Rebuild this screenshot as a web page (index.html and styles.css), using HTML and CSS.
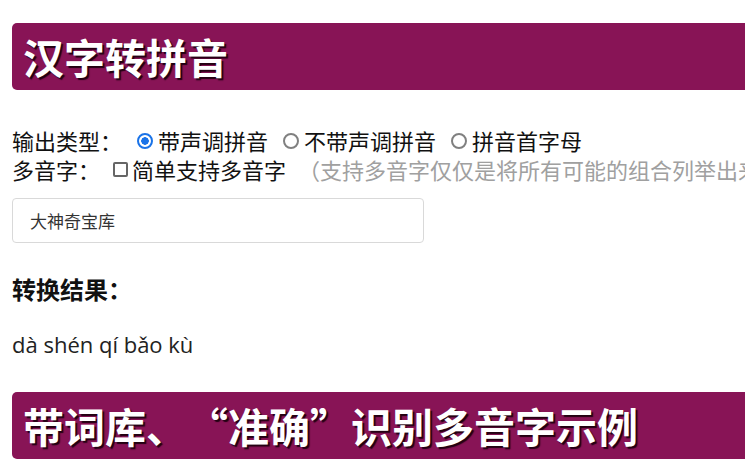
FILE: index.html
```html
<!DOCTYPE html>
<html lang="zh-CN">
<head>
    <meta charset="UTF-8">
    <meta name="viewport" content="width=device-width, initial-scale=1.0">
    <title>汉字转拼音</title>
    <link rel="stylesheet" href="styles.css">
</head>
<body>

<div class="page">
    <h2 class="banner">汉字转拼音</h2>

    <div class="options">
        <div class="opt-row">
            <span class="opt-label">输出类型：</span>
            <label class="choice"><input type="radio" name="type" class="radio" checked>带声调拼音</label>
            <label class="choice"><input type="radio" name="type" class="radio">不带声调拼音</label>
            <label class="choice"><input type="radio" name="type" class="radio">拼音首字母</label>
        </div>
        <div class="opt-row">
            <span class="opt-label">多音字：</span>
            <label class="choice"><input type="checkbox" class="check">简单支持多音字</label>
            <span class="hint">（支持多音字仅仅是将所有可能的组合列举出来，仅供参考）</span>
        </div>
    </div>

    <input type="text" class="source" value="大神奇宝库">

    <h3 class="result-title">转换结果：</h3>
    <p class="result">dà shén qí bǎo kù</p>

    <h2 class="banner">带词库、<span class="q-open">“</span>准确<span class="q-close">”</span>识别多音字示例</h2>
</div>

</body>
</html>
```

FILE: styles.css
```css
html, body {
    margin: 0;
    overflow: hidden;
    background: #ffffff;
}
body {
    font-family: "Noto Sans CJK SC", "Noto Sans", sans-serif;
    color: #111;
}
.page {
    width: 1000px;
    padding: 23px 0 0 12px;
    display: flex;
    flex-direction: column;
    align-items: flex-start;
}
.banner {
    align-self: stretch;
    margin: 0;
    height: 67px;
    padding-left: 11px;
    background-color: #881456;
    border-radius: 5px;
    color: #ffffff;
    font-size: 41px;
    font-weight: bold;
    line-height: 67px;
    text-shadow: 2px 2px 1px rgba(30, 0, 15, 0.95);
    white-space: nowrap;
}
.q-open, .q-close {
    display: inline-block;
    width: 1em;
}
.q-open {
    text-align: right;
}
.q-close {
    text-align: left;
}
.options {
    margin-top: 36px;
    font-size: 22px;
    line-height: 29px;
}
.opt-row {
    display: flex;
    align-items: center;
    white-space: nowrap;
}
.opt-label {
    margin-right: 15px;
}
.opt-row + .opt-row .opt-label {
    margin-right: 13px;
}
.choice {
    display: flex;
    align-items: center;
    margin-right: 15px;
}
.radio {
    appearance: none;
    width: 16px;
    height: 16px;
    margin: 0 5px 0 0;
    border: 2px solid #808080;
    border-radius: 50%;
    box-sizing: border-box;
}
.radio:checked {
    border-color: #1a73e8;
    background: radial-gradient(circle, #1a73e8 0 3.5px, #fff 4px);
}
.check {
    appearance: none;
    width: 15px;
    height: 15px;
    margin: 0 4px 0 0;
    border: 2px solid #666;
    border-radius: 2px;
    box-sizing: border-box;
}
.hint {
    margin-left: -3px;
    color: #a0a0a0;
}
.source {
    margin-top: 14px;
    width: 412px;
    height: 45px;
    box-sizing: border-box;
    padding: 0 17px;
    border: 1px solid #d9d9d9;
    border-radius: 4px;
    font-family: inherit;
    font-size: 17px;
    color: #333;
    outline: none;
}
.result-title {
    margin: 31px 0 0;
    font-size: 24px;
    line-height: 30px;
    font-weight: bold;
    color: #111;
}
.result {
    margin: 25px 0 33px;
    font-family: "Open Sans", "Noto Sans", sans-serif;
    font-size: 22px;
    line-height: 30px;
    color: #222;
}
```
